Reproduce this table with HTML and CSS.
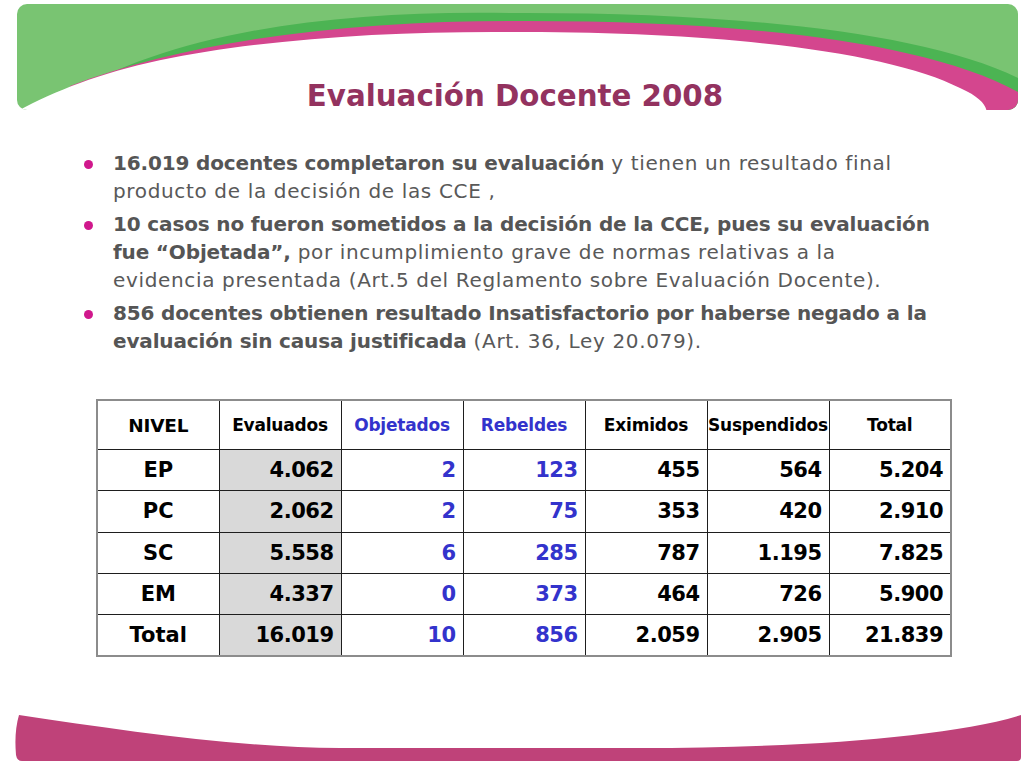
FILE: index.html
```html
<!DOCTYPE html>
<html lang="es">
<head>
<meta charset="utf-8">
<title>Evaluación Docente 2008</title>
<link rel="stylesheet" href="styles.css">
</head>
<body>
<div class="slide">
  <header class="top">
    <svg class="top-art" viewBox="0 0 1024 115" width="1024" height="115" aria-hidden="true">
      <defs>
        <clipPath id="hdrclip">
          <rect x="17" y="4" width="1001" height="106" rx="10" ry="10"/>
        </clipPath>
      </defs>
      <g clip-path="url(#hdrclip)">
        <rect x="0" y="0" width="1024" height="115" fill="#79C472"/>
        <path d="M60,100 C170,30 340,10 510,13 C720,12 920,30 1018,78 L1018,115 L60,115 Z" fill="#4CB453"/>
        <path d="M70,86 C190,40 350,21 510,21 C720,20 920,38 1018,92 L1018,115 L70,115 Z" fill="#D4468E"/>
        <path d="M14,113 C30,104 55,92 80,83 C180,45 350,31 510,32 C720,31 890,52 960,88 C982,98 987,106 987,115 L14,115 Z" fill="#FFFFFF"/>
      </g>
    </svg>
    <h1 class="title">Evaluación Docente 2008</h1>
  </header>

  <ul class="points">
    <li>
      <div class="text">
        <span class="line"><b>16.019 docentes completaron su evaluación</b> y tienen un resultado final</span>
        <span class="line">producto de la decisión de las CCE ,</span>
      </div>
    </li>
    <li>
      <div class="text">
        <span class="line"><b>10 casos no fueron sometidos a la decisión de la CCE, pues su evaluación</b></span>
        <span class="line"><b>fue “Objetada”,</b> por incumplimiento grave de normas relativas a la</span>
        <span class="line">evidencia presentada (Art.5 del Reglamento sobre Evaluación Docente).</span>
      </div>
    </li>
    <li>
      <div class="text">
        <span class="line"><b>856 docentes obtienen resultado Insatisfactorio por haberse negado a la</b></span>
        <span class="line"><b>evaluación sin causa justificada</b> (Art. 36, Ley 20.079).</span>
      </div>
    </li>
  </ul>

  <table class="grid">
    <colgroup>
      <col class="c"><col class="c"><col class="c"><col class="c"><col class="c"><col class="c"><col class="c">
    </colgroup>
    <thead>
      <tr>
        <th class="nivel">NIVEL</th>
        <th>Evaluados</th>
        <th class="blue">Objetados</th>
        <th class="blue">Rebeldes</th>
        <th>Eximidos</th>
        <th>Suspendidos</th>
        <th>Total</th>
      </tr>
    </thead>
    <tbody>
      <tr><td class="lvl">EP</td><td class="eval">4.062</td><td class="blue">2</td><td class="blue">123</td><td>455</td><td>564</td><td>5.204</td></tr>
      <tr><td class="lvl">PC</td><td class="eval">2.062</td><td class="blue">2</td><td class="blue">75</td><td>353</td><td>420</td><td>2.910</td></tr>
      <tr><td class="lvl">SC</td><td class="eval">5.558</td><td class="blue">6</td><td class="blue">285</td><td>787</td><td>1.195</td><td>7.825</td></tr>
      <tr><td class="lvl">EM</td><td class="eval">4.337</td><td class="blue">0</td><td class="blue">373</td><td>464</td><td>726</td><td>5.900</td></tr>
      <tr><td class="lvl">Total</td><td class="eval">16.019</td><td class="blue">10</td><td class="blue">856</td><td>2.059</td><td>2.905</td><td>21.839</td></tr>
    </tbody>
  </table>

  <footer class="bottom">
    <svg class="bottom-art" viewBox="0 0 1024 52" width="1024" height="52" aria-hidden="true">
      <path d="M19,3 C120,18 240,36 340,36 L640,36 C800,36 950,25 1021,3 L1021,45 Q1021,49 1017,49 L22,49 Q17,49 16,43 Q14,20 19,3 Z" fill="#BF4279"/>
    </svg>
  </footer>
</div>
</body>
</html>
```

FILE: styles.css
```css
html, body {
  margin: 0;
  padding: 0;
  background: #ffffff;
}

body {
  font-family: "DejaVu Sans", "Liberation Sans", sans-serif;
}

.slide {
  width: 1024px;
  height: 768px;
  overflow: hidden;
  display: flex;
  flex-direction: column;
}

/* Header decoration + title share one grid cell */
.top {
  display: grid;
  height: 115px;
  flex: none;
}

.top > * {
  grid-area: 1 / 1;
}

.top-art {
  display: block;
  width: 1024px;
  height: 115px;
}

.title {
  margin: 0;
  align-self: end;
  justify-self: center;
  padding: 0 0 2px 6px;
  font-size: 29.3px;
  line-height: 34px;
  font-weight: bold;
  color: #93325F;
}

/* Bullet list */
.points {
  list-style: none;
  margin: 34px 0 0 84px;
  padding: 0;
  color: #595959;
  font-size: 20px;
  line-height: 28px;
  flex: none;
}

.points li {
  display: flex;
  margin-bottom: 5px;
}

.points li::before {
  content: "";
  flex: none;
  width: 9px;
  height: 9px;
  border-radius: 50%;
  background: #D0188C;
  margin-top: 11px;
  margin-right: 20px;
}

.line {
  display: block;
  white-space: nowrap;
  letter-spacing: 0.65px;
}

.line b {
  letter-spacing: -0.15px;
  color: #555555;
}

/* Table */
.grid {
  border-collapse: collapse;
  table-layout: fixed;
  width: 856px;
  margin: 39px 0 0 96px;
  border: 2px solid #8c8c8c;
  flex: none;
}

.grid col.c {
  width: 122px;
}

.grid th,
.grid td {
  border: 1px solid #1e1e1e;
  color: #000000;
  font-weight: bold;
}

.grid th {
  height: 48px;
  padding: 0;
  text-align: center;
  font-size: 17px;
  letter-spacing: -0.2px;
}

.grid th.nivel {
  font-size: 18.5px;
}

.grid td {
  height: 40.3px;
  padding: 0 7px 0 0;
  text-align: right;
  font-size: 21px;
  letter-spacing: -0.5px;
}

.grid td.lvl {
  text-align: center;
  padding: 0;
  letter-spacing: 0;
}

.grid .eval {
  background: #D9D9D9;
}

.grid .blue {
  color: #3333CC;
}

/* Footer bar */
.bottom {
  margin-top: auto;
  padding-bottom: 4px;
  flex: none;
}

.bottom-art {
  display: block;
  width: 1024px;
  height: 52px;
}
```
